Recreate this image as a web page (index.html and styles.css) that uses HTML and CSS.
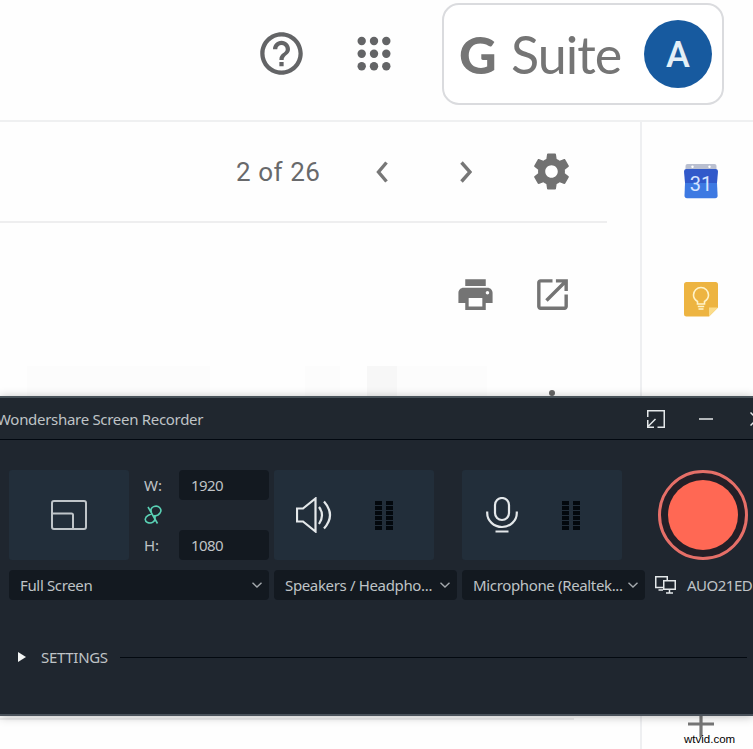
FILE: index.html
```
<!DOCTYPE html>
<html lang="en">
<head>
<meta charset="utf-8">
<title>Mail</title>
<link rel="stylesheet" href="styles.css">
</head>
<body>
<div class="page">
  <header class="topbar">
    <svg class="help" viewBox="0 0 24 24"><path d="M11 18h2v-2h-2v2zm1-16C6.48 2 2 6.48 2 12s4.48 10 10 10 10-4.48 10-10S17.52 2 12 2zm0 18c-4.41 0-8-3.59-8-8s3.59-8 8-8 8 3.59 8 8-3.59 8-8 8zm0-14c-2.21 0-4 1.79-4 4h2c0-1.1.9-2 2-2s2 .9 2 2c0 2-3 1.75-3 5h2c0-2.25 3-2.5 3-5 0-2.21-1.79-4-4-4z"/></svg>
    <svg class="apps" viewBox="0 0 34 36"><g><circle cx="4.7" cy="5" r="4.2"/><circle cx="17" cy="5" r="4.2"/><circle cx="29.3" cy="5" r="4.2"/><circle cx="4.7" cy="17.7" r="4.2"/><circle cx="17" cy="17.7" r="4.2"/><circle cx="29.3" cy="17.7" r="4.2"/><circle cx="4.7" cy="30.3" r="4.2"/><circle cx="17" cy="30.3" r="4.2"/><circle cx="29.3" cy="30.3" r="4.2"/></g></svg>
    <div class="account">
      <div class="brand"><b>G</b><span>Suite</span></div>
      <div class="avatar">A</div>
    </div>
  </header>
  <div class="main">
    <main class="mail">
      <div class="pager">
        <span class="count">2 of 26</span>
        <svg class="chev left" viewBox="0 0 12 22"><path d="M10.5 1.5L2.5 11l8 9.500"/></svg>
        <svg class="chev right" viewBox="0 0 12 22"><path d="M1.500 1.500L10 11l-8.500 9.500"/></svg>
        <svg class="gear" viewBox="0 0 24 24"><path d="M19.430 12.980c.04-.32.07-.64.07-.98s-.03-.66-.07-.98l2.110-1.650c.19-.15.24-.42.12-.64l-2-3.460c-.12-.22-.39-.3-.61-.22l-2.490 1c-.52-.4-1.080-.73-1.690-.98l-.38-2.650C14.460 2.180 14.250 2 14 2h-4c-.25 0-.46.18-.49.42l-.38 2.650c-.61.25-1.170.59-1.690.98l-2.490-1c-.23-.09-.49 0-.61.22l-2 3.460c-.13.22-.07.49.12.64l2.110 1.650c-.04.32-.07.65-.07.98s.03.66.07.98l-2.110 1.650c-.19.15-.24.42-.12.64l2 3.460c.12.22.39.3.61.22l2.490-1c.52.4 1.080.73 1.690.98l.38 2.650c.03.24.24.42.49.42h4c.25 0 .46-.18.49-.42l.38-2.650c.61-.25 1.170-.59 1.690-.98l2.490 1c.23.09.49 0 .61-.22l2-3.460c.12-.22.07-.49-.12-.64l-2.110-1.650zM12 15.500c-1.930 0-3.500-1.570-3.500-3.500s1.570-3.500 3.500-3.500 3.500 1.570 3.500 3.500-1.570 3.500-3.500 3.500z"/></svg>
      </div>
      <div class="actions">
        <svg class="print" viewBox="0 0 24 24"><path d="M19 8H5c-1.660 0-3 1.340-3 3v6h4v4h12v-4h4v-6c0-1.660-1.340-3-3-3zm-3 11H8v-5h8v5zm3-7c-.55 0-1-.45-1-1s.45-1 1-1 1 .45 1 1-.45 1-1 1zm-1-9H6v4h12V3z"/></svg>
        <svg class="open" viewBox="0 0 24 24"><path d="M19 19H5V5h7V3H5c-1.110 0-2 .9-2 2v14c0 1.100.89 2 2 2h14c1.100 0 2-.9 2-2v-7h-2v7zM14 3v2h3.590l-9.830 9.830 1.410 1.410L19 6.410V10h2V3h-7z"/></svg>
      </div>
      <div class="sender"><i class="blur wide"></i><i class="blur mid"></i><i class="blur dark"></i><i class="blur small"></i><i class="more"></i></div>
      <div class="footline"></div>
    </main>
    <aside class="side">
      <svg class="cal" viewBox="0 0 34 35"><rect x="1.500" width="31" height="9" rx="2" fill="#b9bfd0"/><circle cx="8.500" cy="2.800" r="1.200" fill="#fff"/><circle cx="25.500" cy="2.800" r="1.200" fill="#fff"/><path d="M2 5h30q2 0 2 2.500L33 19H1L0 7.500Q0 5 2 5z" fill="#3159ca"/><path d="M1 19h32l.6 12.500q0 2.700-2.500 2.700H3q-2.500 0-2.500-2.700z" fill="#3d79e2"/><text x="17" y="27">31</text></svg>
      <svg class="keep" viewBox="0 0 34 35"><path d="M2.500 0h29Q34 0 34 2.500V25.500l-9 9H2.500Q0 34.500 0 32V2.500Q0 0 2.500 0z" fill="#edb441"/><path d="M34 25.500h-9v9z" fill="#fbdc8a"/><path d="M13.500 22v-2.500q-4-2.500-4-6.500a7.500 7.500 0 0 1 15 0q0 4-4 6.500V22zM13.800 24.500h6.400M14.500 27h5" fill="none" stroke="#fff3c9" stroke-width="1.600"/></svg>
      <svg class="plus" viewBox="0 0 26 26"><path d="M13 0v26M0 13h26"/></svg>
    </aside>
  </div>
</div>

<section class="recorder">
  <div class="titlebar">
    <span class="title">Wondershare Screen Recorder</span>
    <svg class="dock" viewBox="0 0 18 18"><path d="M.75 7V.75h16.500v16.500H10.500M8.500 9L1.500 16M.75 10v7.250H7"/></svg>
    <svg class="min" viewBox="0 0 14 2"><path d="M0 1h14"/></svg>
    <svg class="close" viewBox="0 0 14 14"><path d="M.5 .5l13 13M13.500 .5l-13 13"/></svg>
  </div>
  <div class="controls">
    <div class="group">
      <div class="row">
        <div class="card screen"><svg class="fs" viewBox="0 0 36 30"><rect x="1" y="1" width="34" height="28" rx="2"/><path d="M1 13.500h19.500q1.500 0 1.500 1.500v14"/></svg></div>
        <div class="labels"><span>W:</span>
          <svg class="chain" viewBox="0 0 18 20"><path d="M7.500 7.500C5 1 13 0 15.500 2.500S17 8 14 10l-4 1.500M10.500 10C13 17 7 19 3.500 17.500S1 12 4 10.500l4-2M4 2l9.500 16.500"/></svg>
          <span>H:</span></div>
        <div class="fields"><div class="field">1920</div><div class="field">1080</div></div>
      </div>
      <div class="select"><span>Full Screen</span><svg viewBox="0 0 10 6"><path d="M.5 .8L5 5 9.500 .8"/></svg></div>
    </div>
    <div class="group">
      <div class="card audio">
        <svg class="spk" viewBox="0 0 37 36"><path d="M1 11.500h6L19.500 1.500v33L7 24.500H1zM23 10q6 8 0 17M28 4.500q12 13.500 0 27"/></svg>
        <div class="meter"><i></i><i></i></div>
      </div>
      <div class="select"><span>Speakers / Headpho...</span><svg viewBox="0 0 10 6"><path d="M.5 .8L5 5 9.500 .8"/></svg></div>
    </div>
    <div class="group">
      <div class="card audio">
        <svg class="mic" viewBox="0 0 32 36"><rect x="9" y="1" width="14" height="22" rx="7"/><path d="M1.200 14.500v1.500a14.800 14 0 0 0 29.600 0v-1.500M9.500 34.500h13"/></svg>
        <div class="meter"><i></i><i></i></div>
      </div>
      <div class="select mics"><span>Microphone (Realtek...</span><svg viewBox="0 0 10 6"><path d="M.5 .8L5 5 9.500 .8"/></svg></div>
    </div>
    <div class="record">
      <div class="ring"><div class="dot"></div></div>
      <div class="display"><svg viewBox="0 0 21 18"><path d="M8 11.500H.75V.75h11.500V4M3.500 14H8M8.750 4.750h11.500v8.500H8.750zM14.500 13.500V17M11 17h7"/></svg><span>AUO21ED</span></div>
    </div>
  </div>
  <div class="settings"><svg viewBox="0 0 8 10"><path d="M0 0l8 5-8 5z"/></svg><span>SETTINGS</span><div class="rule"></div></div>
</section>
<div class="mark">wtvid.com</div>
</body>
</html>
```

FILE: styles.css
```
* { box-sizing: border-box; }
body { margin: 0; background: #fefefe; overflow: hidden; }
svg { display: block; flex: none; }
i { display: block; }
.page { width: 753px; height: 749px; display: flex; flex-direction: column; overflow: hidden; font-family: Roboto, sans-serif; }
.topbar { height: 122px; border-bottom: 2px solid #eff0f1; display: flex; align-items: flex-start; padding: 3px 0 0 256px; flex: none; }
.help { width: 51px; height: 51px; margin-top: 25px; fill: #636466; }
.apps { width: 34px; height: 36px; margin: 33px 0 0 50px; fill: #636466; }
.account { width: 282px; height: 102px; margin-left: 51px; border: 2px solid #dadbde; border-radius: 17px; display: flex; align-items: center; padding: 0 10px 0 15px; justify-content: space-between; background: #fff; }
.brand { display: flex; align-items: baseline; color: #757575; font: 52px/62px Lato, sans-serif; }
.brand b { font-weight: 900; width: 52px; }
.brand span { letter-spacing: -1px; }
.avatar { width: 68px; height: 68px; border-radius: 50%; background: #175a9f; color: #e4f0f7; font: 500 36px/71px Roboto, sans-serif; text-align: center; }
.main { flex: 1; display: flex; }
.mail { width: 640px; display: flex; flex-direction: column; flex: none; }
.pager { width: 607px; height: 101px; border-bottom: 2px solid #eeeeef; display: flex; align-items: center; padding-left: 236px; }
.count { width: 140px; font-size: 26px; color: #68696b; letter-spacing: .55px; line-height: 30px; }
.chev { width: 12px; height: 22px; fill: none; stroke: #777; stroke-width: 3.400; }
.chev.right { margin-left: 72px; }
.gear { width: 43px; height: 43px; margin-left: 58px; fill: #717171; }
.actions { height: 143px; display: flex; align-items: center; padding-left: 455px; gap: 36px; }
.print { width: 41px; height: 41px; fill: #747474; }
.open { width: 41px; height: 41px; fill: #747474; }
.sender { height: 352px; display: flex; align-items: flex-start; padding-left: 27px; }
.blur { height: 32px; background: #fcfcfc; }
.wide { width: 183px; }
.mid { width: 35px; margin-left: 95px; }
.dark { width: 30px; margin-left: 27px; background: #f7f7f7; }
.small { width: 90px; }
.more { width: 6px; height: 6px; border-radius: 50%; background: #666; margin: 24px 0 0 62px; }
.footline { width: 574px; height: 2px; background: #eeeeef; flex: none; }
.side { flex: 1; border-left: 2px solid #eeeff1; display: flex; flex-direction: column; align-items: flex-start; padding: 42px 0 0 42px; }
.cal { width: 34px; height: 35px; }
.cal text { font: 20px Roboto, sans-serif; fill: #d6e4ff; text-anchor: middle; }
.keep { width: 34px; height: 35px; margin-top: 83px; }
.plus { width: 26px; height: 26px; margin: 394px 0 0 4px; stroke: #777; stroke-width: 3.200; }

.recorder { position: absolute; left: 0; top: 396px; width: 753px; height: 320px; overflow: visible; background: #1f262f; border-top: 2px solid #49535a; border-bottom: 2px solid #49515a; box-shadow: 0 1px 9px rgba(0,0,0,.25); color: #bfc3c6; font: 15px/20px "Noto Sans", sans-serif; clip-path: inset(-20px 0 -20px 0); }
.recorder svg { fill: none; stroke: #e4e8ea; }
.titlebar { height: 42px; background: #20272f; border-bottom: 1px solid #020810; display: flex; align-items: center; overflow: hidden; }
.title { width: 650px; margin-left: -3px; flex: none; letter-spacing: -.3px; }
.dock { width: 18px; height: 18px; stroke-width: 1.500; }
.min { width: 14px; height: 2px; margin-left: 34px; stroke-width: 1.500; }
.close { width: 14px; height: 14px; margin-left: 37px; stroke-width: 1.500; }
.controls { display: flex; gap: 5px; padding: 30px 0 0 9px; }
.group { width: 183px; display: flex; flex-direction: column; gap: 10px; flex: none; }
.group:first-child { width: 260px; }
.row { display: flex; }
.card { height: 90px; background: #222e3a; border-radius: 3px; display: flex; align-items: center; }
.screen { width: 120px; justify-content: center; }
.fs { width: 36px; height: 30px; stroke-width: 2; }
.recorder .fs { stroke: #bfc5c9; }
.labels { width: 50px; padding: 5px 0 5px 15px; display: flex; flex-direction: column; justify-content: space-between; }
.chain { width: 18px; height: 20px; stroke-width: 1.600; }
.recorder .chain { stroke: #5ad1b5; }
.fields { width: 90px; display: flex; flex-direction: column; justify-content: space-between; }
.field { height: 30px; background: #131920; border-radius: 4px; padding: 0 0 0 12px; line-height: 31px; letter-spacing: -.55px; }
.audio { width: 160px; padding-left: 22px; }
.spk { width: 37px; height: 36px; stroke-width: 2.200; }
.mic { width: 32px; height: 36px; stroke-width: 2.200; margin-left: 2px; }
.meter { display: flex; gap: 4px; margin-left: 42px; padding-top: 1px; }
.mic + .meter { margin-left: 44px; }
.meter i { width: 7px; height: 29px; background: repeating-linear-gradient(#03080d 0 4px, #222e3a 4px 5px); }
.select { height: 30px; background: #131920; border-radius: 4px; padding: 0 7px 0 11px; display: flex; align-items: center; justify-content: space-between; letter-spacing: -.35px; white-space: nowrap; }
.select svg { width: 10px; height: 6px; stroke-width: 1.400; }
.recorder .select svg { stroke: #a4a9ad; }
.record { flex: 1; padding-left: 8px; }
.ring { width: 90px; height: 90px; border: 3px solid #e66f68; border-radius: 50%; background: #241f27; display: flex; align-items: center; justify-content: center; }
.dot { width: 70px; height: 70px; border-radius: 50%; background: #ff6854; }
.display { display: flex; align-items: center; gap: 11px; margin: 15px 0 0 -3px; letter-spacing: -.5px; }
.display svg { width: 21px; height: 18px; stroke-width: 1.500; }
.settings { display: flex; align-items: center; margin: 47px 6px 0 18px; }
.settings svg { width: 8px; height: 10px; }
.recorder .settings svg { fill: #f3f5f5; stroke: none; }
.settings span { width: 79px; margin-left: 15px; letter-spacing: -.3px; }
.rule { flex: 1; height: 1px; background: #030910; }
.mark { position: absolute; left: 684px; top: 733px; font: 11.500px/13px "Liberation Sans", sans-serif; color: #000; }
```
